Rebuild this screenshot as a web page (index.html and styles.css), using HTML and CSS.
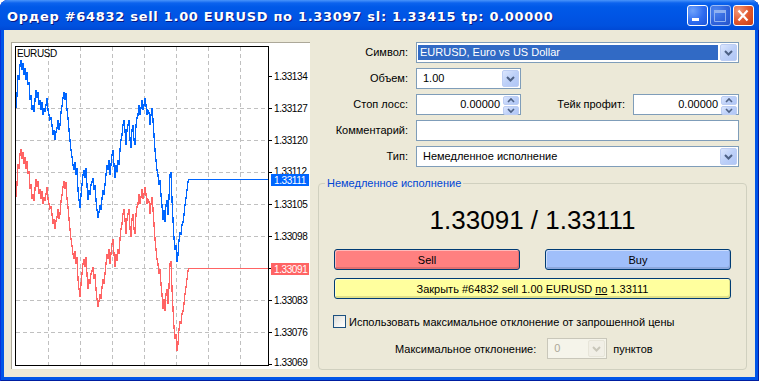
FILE: index.html
```html
<!DOCTYPE html>
<html lang="ru">

<head>
    <meta charset="UTF-8">
    <title>Ордер #64832</title>
    <link rel="stylesheet" href="styles.css">
</head>

<body>

    <div class="window">

        <div class="titlebar">
            <span class="title">Ордер #64832 sell 1.00 EURUSD по 1.33097 sl: 1.33415 tp: 0.00000</span>
            <div class="controls">
                <span class="ctl ctl-min">
                    <svg width="19" height="19" viewBox="0 0 19 19"><rect x="4" y="12" width="7" height="3" fill="#fff"/></svg>
                </span>
                <span class="ctl ctl-max">
                    <svg width="19" height="19" viewBox="0 0 19 19"><path d="M3.5 4.5h11v11h-11z" fill="none" stroke="#8fb1f1"/><rect x="3" y="4" width="12" height="3" fill="#8fb1f1"/></svg>
                </span>
                <span class="ctl ctl-close">
                    <svg width="19" height="19" viewBox="0 0 19 19"><path d="M4.5 4.5l9 10M13.5 4.5l-9 10" stroke="#fff" stroke-width="2.2"/></svg>
                </span>
            </div>
        </div>

        <div class="client">

            <div class="chart">
                <svg width="297" height="325" viewBox="12 43 297 325" shape-rendering="crispEdges">
                    <defs>
                        <polyline id="ticks" fill="none" points="16,108 17,95 18,75 19,80 20,65 21,60 22,70 23,63 24,75 25,68 26,80 27,72 28,85 29,82 30,100 31,95 32,110 33,105 34,112 35,100 36,90 37,98 38,92 39,105 40,100 41,110 42,102 43,115 44,108 45,112 46,105 47,98 48,110 49,115 50,120 51,118 52,125 53,135 54,130 55,140 56,132 57,128 58,120 59,130 60,125 61,112 62,106 63,98 64,92 65,100 66,93 67,110 68,118 69,130 70,140 71,150 72,157 73,165 74,170 75,162 76,175 77,168 78,190 79,200 80,208 81,195 82,185 83,175 84,170 85,178 86,168 87,185 88,200 89,190 90,195 91,185 92,182 93,178 94,190 95,185 96,200 97,210 98,218 99,212 100,205 101,210 102,198 103,190 104,195 105,185 106,175 107,165 108,170 109,160 110,175 111,165 112,155 113,150 114,165 115,178 116,165 117,172 118,160 119,165 120,150 121,140 122,135 123,125 124,120 125,130 126,145 127,130 128,125 129,120 130,140 131,148 132,130 133,125 134,140 135,145 136,125 137,118 138,115 139,105 140,115 141,108 142,100 143,110 144,105 145,98 146,105 147,115 148,110 149,112 150,125 151,115 152,108 153,120 154,135 155,150 156,160 157,170 158,175 159,185 160,180 161,195 162,205 163,220 164,210 165,222 166,205 167,200 168,215 169,198 170,175 171,172 172,200 173,220 174,238 175,250 176,245 177,262 178,255 179,240 180,232 181,235 182,225 183,222 184,215 185,205 186,198 187,190 188,182 189,179.5 268,179.5"/>
                    </defs>

                    <g class="grid">
                        <path d="M48.5 47v318M80.5 47v318M112.5 47v318M144.5 47v318M176.5 47v318M208.5 47v318M240.5 47v318"/>
                        <path d="M16 108.5h252M16 140.5h252M16 172.5h252M16 204.5h252M16 236.5h252M16 268.5h252M16 300.5h252M16 332.5h252"/>
                    </g>

                    <use href="#ticks" stroke="#ff6464" stroke-width="1.3" transform="translate(0 89)"/>
                    <use href="#ticks" stroke="#0066ff" stroke-width="1.3"/>

                    <path class="frame" d="M15.5 46.5h253v319h-253z"/>
                    <path class="frame" d="M268 76.5h4M268 108.5h4M268 140.5h4M268 172.5h4M268 204.5h4M268 236.5h4M268 268.5h4M268 300.5h4M268 332.5h4M268 364.5h4"/>

                    <text class="symbol" x="17" y="57">EURUSD</text>

                    <g class="axis">
                        <text x="274" y="80">1.33134</text>
                        <text x="274" y="112">1.33127</text>
                        <text x="274" y="144">1.33120</text>
                        <text x="274" y="175">1.33112</text>
                        <text x="274" y="208">1.33105</text>
                        <text x="274" y="240">1.33098</text>
                        <text x="274" y="304">1.33083</text>
                        <text x="274" y="336">1.33076</text>
                        <text x="274" y="366">1.33069</text>
                    </g>

                    <rect x="271" y="174" width="40" height="12" fill="#0066ff"/>
                    <text class="axis-tag" x="274" y="184">1.33111</text>
                    <rect x="271" y="263" width="40" height="12" fill="#ff6464"/>
                    <text class="axis-tag" x="274" y="272.5">1.33091</text>
                </svg>
            </div>

            <div class="side">

                <div class="form">
                    <span class="label">Символ:</span>
                    <div class="field combo">
                        <span class="value selected">EURUSD, Euro vs US Dollar</span>
                        <span class="drop"><svg width="15" height="15" viewBox="0 0 15 15"><path d="M4 6l3.5 3.5L11 6" fill="none" stroke="#4d6185" stroke-width="2"/></svg></span>
                    </div>

                    <span class="label">Объем:</span>
                    <div class="field combo volume">
                        <span class="value">1.00</span>
                        <span class="drop"><svg width="15" height="15" viewBox="0 0 15 15"><path d="M4 6l3.5 3.5L11 6" fill="none" stroke="#4d6185" stroke-width="2"/></svg></span>
                    </div>

                    <span class="label">Стоп лосс:</span>
                    <div class="pair">
                        <div class="field spin">
                            <span class="value num">0.00000</span>
                            <span class="arrows">
                                <span class="arrow"><svg width="14" height="7" viewBox="0 0 14 7"><path d="M4 5l3-3 3 3" fill="none" stroke="#4d6185" stroke-width="1.6"/></svg></span>
                                <span class="arrow"><svg width="14" height="7" viewBox="0 0 14 7"><path d="M4 2l3 3 3-3" fill="none" stroke="#4d6185" stroke-width="1.6"/></svg></span>
                            </span>
                        </div>
                        <span class="label pair-label">Тейк профит:</span>
                        <div class="field spin">
                            <span class="value num">0.00000</span>
                            <span class="arrows">
                                <span class="arrow"><svg width="14" height="7" viewBox="0 0 14 7"><path d="M4 5l3-3 3 3" fill="none" stroke="#4d6185" stroke-width="1.6"/></svg></span>
                                <span class="arrow"><svg width="14" height="7" viewBox="0 0 14 7"><path d="M4 2l3 3 3-3" fill="none" stroke="#4d6185" stroke-width="1.6"/></svg></span>
                            </span>
                        </div>
                    </div>

                    <span class="label">Комментарий:</span>
                    <div class="field"></div>

                    <span class="label">Тип:</span>
                    <div class="field combo">
                        <span class="value">Немедленное исполнение</span>
                        <span class="drop"><svg width="15" height="15" viewBox="0 0 15 15"><path d="M4 6l3.5 3.5L11 6" fill="none" stroke="#4d6185" stroke-width="2"/></svg></span>
                    </div>
                </div>

                <fieldset class="group">
                    <legend>Немедленное исполнение</legend>

                    <div class="quote">1.33091 / 1.33111</div>

                    <div class="trade">
                        <button class="btn sell">Sell</button>
                        <button class="btn buy">Buy</button>
                    </div>

                    <button class="btn close">Закрыть #64832 sell 1.00 EURUSD <u>по</u> 1.33111</button>

                    <div class="check">
                        <span class="box"></span>
                        <span>Использовать максимальное отклонение от запрошенной цены</span>
                    </div>

                    <div class="deviation">
                        <span>Максимальное отклонение:</span>
                        <div class="field combo disabled">
                            <span class="value">0</span>
                            <span class="drop"><svg width="15" height="15" viewBox="0 0 15 15"><path d="M4 6l3.5 3.5L11 6" fill="none" stroke="#c9c7ba" stroke-width="2"/></svg></span>
                        </div>
                        <span>пунктов</span>
                    </div>
                </fieldset>

            </div>
        </div>
    </div>

</body>

</html>
```

FILE: styles.css
```css
* {
    box-sizing: border-box;
}

body {
    margin: 0;
    background: #fff;
    font-family: "Liberation Sans", Arial, sans-serif;
    font-size: 11px;
    color: #000;
}

.window {
    width: 759px;
    height: 381px;
    display: flex;
    flex-direction: column;
    background: #0055e8;
    border-radius: 8px 8px 0 0;
    box-shadow: inset 1px 0 #0831d9, inset -1px 0 #001ea0, inset 0 -1px #001ea0;
    overflow: hidden;
}

/* title bar */

.titlebar {
    height: 30px;
    flex: none;
    display: flex;
    align-items: center;
    justify-content: space-between;
    padding: 2px 5px 0 7px;
    background: linear-gradient(to bottom, #4a95fa 0, #0c63ee 3px, #0059e8 7px, #0055e5 50%, #0051df 85%, #0049d5 100%);
}

.title {
    font-family: "DejaVu Sans", sans-serif;
    font-weight: bold;
    font-size: 13px;
    letter-spacing: 0.7px;
    color: #fff;
    text-shadow: 1px 1px 0 #0a1883;
    white-space: nowrap;
}

.controls {
    display: flex;
    gap: 2px;
    margin-top: -2px;
}

.ctl {
    width: 21px;
    height: 21px;
    border: 1px solid #fff;
    border-radius: 3px;
    display: block;
}

.ctl svg {
    display: block;
}

.ctl-min {
    background: radial-gradient(circle at 25% 25%, #6ea2fb 0, #2e6cf0 55%, #1c55d8 100%);
}

.ctl-max {
    border-color: #9fbdf4;
    background: radial-gradient(circle at 25% 25%, #4f86ef 0, #2f63dc 60%, #2653c8 100%);
}

.ctl-close {
    background: radial-gradient(circle at 25% 25%, #f29a7a 0, #e25a30 50%, #c63b14 100%);
}

/* client area */

.client {
    flex: 1;
    display: flex;
    margin: 0 4px 4px 4px;
    background: #ece9d8;
}

.chart {
    width: 299px;
    height: 327px;
    margin: 12px 0 0 7px;
    background: #fff;
    border-left: 1px solid #aca899;
    border-top: 1px solid #aca899;
    overflow: hidden;
}

.chart svg {
    display: block;
}

.grid path {
    fill: none;
    stroke: #c0c0c0;
    stroke-dasharray: 4 3;
}

.frame {
    fill: none;
    stroke: #000;
}

.chart text {
    font-family: "Liberation Sans", Arial, sans-serif;
    font-size: 10px;
    letter-spacing: -0.4px;
    fill: #000;
}

.chart .axis-tag {
    fill: #fff;
}

/* order form */

.side {
    flex: 1;
    padding: 12px 8px 0 8px;
}

.form {
    display: grid;
    grid-template-columns: 90px 323px;
    grid-auto-rows: 21px;
    column-gap: 8px;
    row-gap: 5px;
}

.label {
    text-align: right;
    line-height: 21px;
    white-space: nowrap;
}

.field {
    height: 21px;
    border: 1px solid #7f9db9;
    background: #fff;
    display: flex;
    align-items: center;
    padding: 1px;
}

.value {
    flex: 1;
    line-height: 15px;
    padding-left: 5px;
    white-space: nowrap;
}

.value.selected {
    height: 15px;
    margin-right: 2px;
    padding-left: 2px;
    background: #316ac5;
    color: #fff;
}

.value.num {
    text-align: right;
    padding-right: 3px;
}

.drop {
    width: 17px;
    height: 17px;
    border: 1px solid #bccdf3;
    border-radius: 2px;
    background: linear-gradient(135deg, #dbe6fd 0, #bdd0f8 50%, #b0c6f6 100%);
    display: flex;
    align-items: center;
    justify-content: center;
}

.drop svg {
    display: block;
}

.volume {
    width: 105px;
}

.pair {
    display: flex;
}

.pair .spin {
    width: 105px;
}

.pair .spin:last-child {
    width: 106px;
}

.pair-label {
    flex: 1;
    margin-right: 8px;
}

.arrows {
    width: 16px;
    height: 17px;
    display: flex;
    flex-direction: column;
    gap: 1px;
}

.arrow {
    flex: 1;
    border: 1px solid #bccdf3;
    border-radius: 2px;
    background: linear-gradient(135deg, #dbe6fd 0, #bdd0f8 50%, #b0c6f6 100%);
    display: flex;
    align-items: center;
    justify-content: center;
}

.arrow svg {
    display: block;
}

/* execution group */

.group {
    margin: 10px 0 0 0;
    padding: 0 15px 10px 15px;
    border: 1px solid #d0d0bf;
    border-radius: 4px;
    min-inline-size: 0;
}

.group legend {
    margin-left: -9px;
    padding: 0 2px;
    line-height: 13px;
    color: #0046d5;
}

.quote {
    margin-top: 15px;
    height: 30px;
    line-height: 30px;
    text-align: center;
    font-size: 26px;
}

.trade {
    display: flex;
    gap: 25px;
    margin-top: 14px;
}

.btn {
    height: 21px;
    padding: 0;
    border: 1px solid #003c74;
    border-radius: 3px;
    font-family: inherit;
    font-size: 11px;
    color: #000;
    box-shadow: inset 1px 1px 0 rgba(255, 255, 255, 0.45), inset -1px -2px 0 rgba(0, 0, 0, 0.12);
}

.trade .btn {
    flex: 1;
}

.sell {
    background: #ff8080;
}

.buy {
    background: #a0bffa;
}

.close {
    display: block;
    width: 100%;
    margin-top: 8px;
    background: #ffff9e;
}

.check {
    display: flex;
    align-items: center;
    gap: 3px;
    height: 13px;
    margin: 16px 0 0 -1px;
}

.box {
    width: 13px;
    height: 13px;
    border: 1px solid #1c5180;
    background: linear-gradient(135deg, #dcdcd7 0, #f4f4f1 60%, #fff 100%);
}

.deviation {
    display: flex;
    align-items: center;
    height: 21px;
    margin-top: 10px;
    padding-left: 61px;
}

.deviation .combo {
    width: 60px;
    margin: 0 6px 0 11px;
}

.combo.disabled {
    border-color: #c9c7ba;
    background: #f5f4ea;
}

.combo.disabled .value {
    color: #aca899;
}

.combo.disabled .drop {
    border-color: #e7e5d9;
    background: #f1efe6;
}
```
